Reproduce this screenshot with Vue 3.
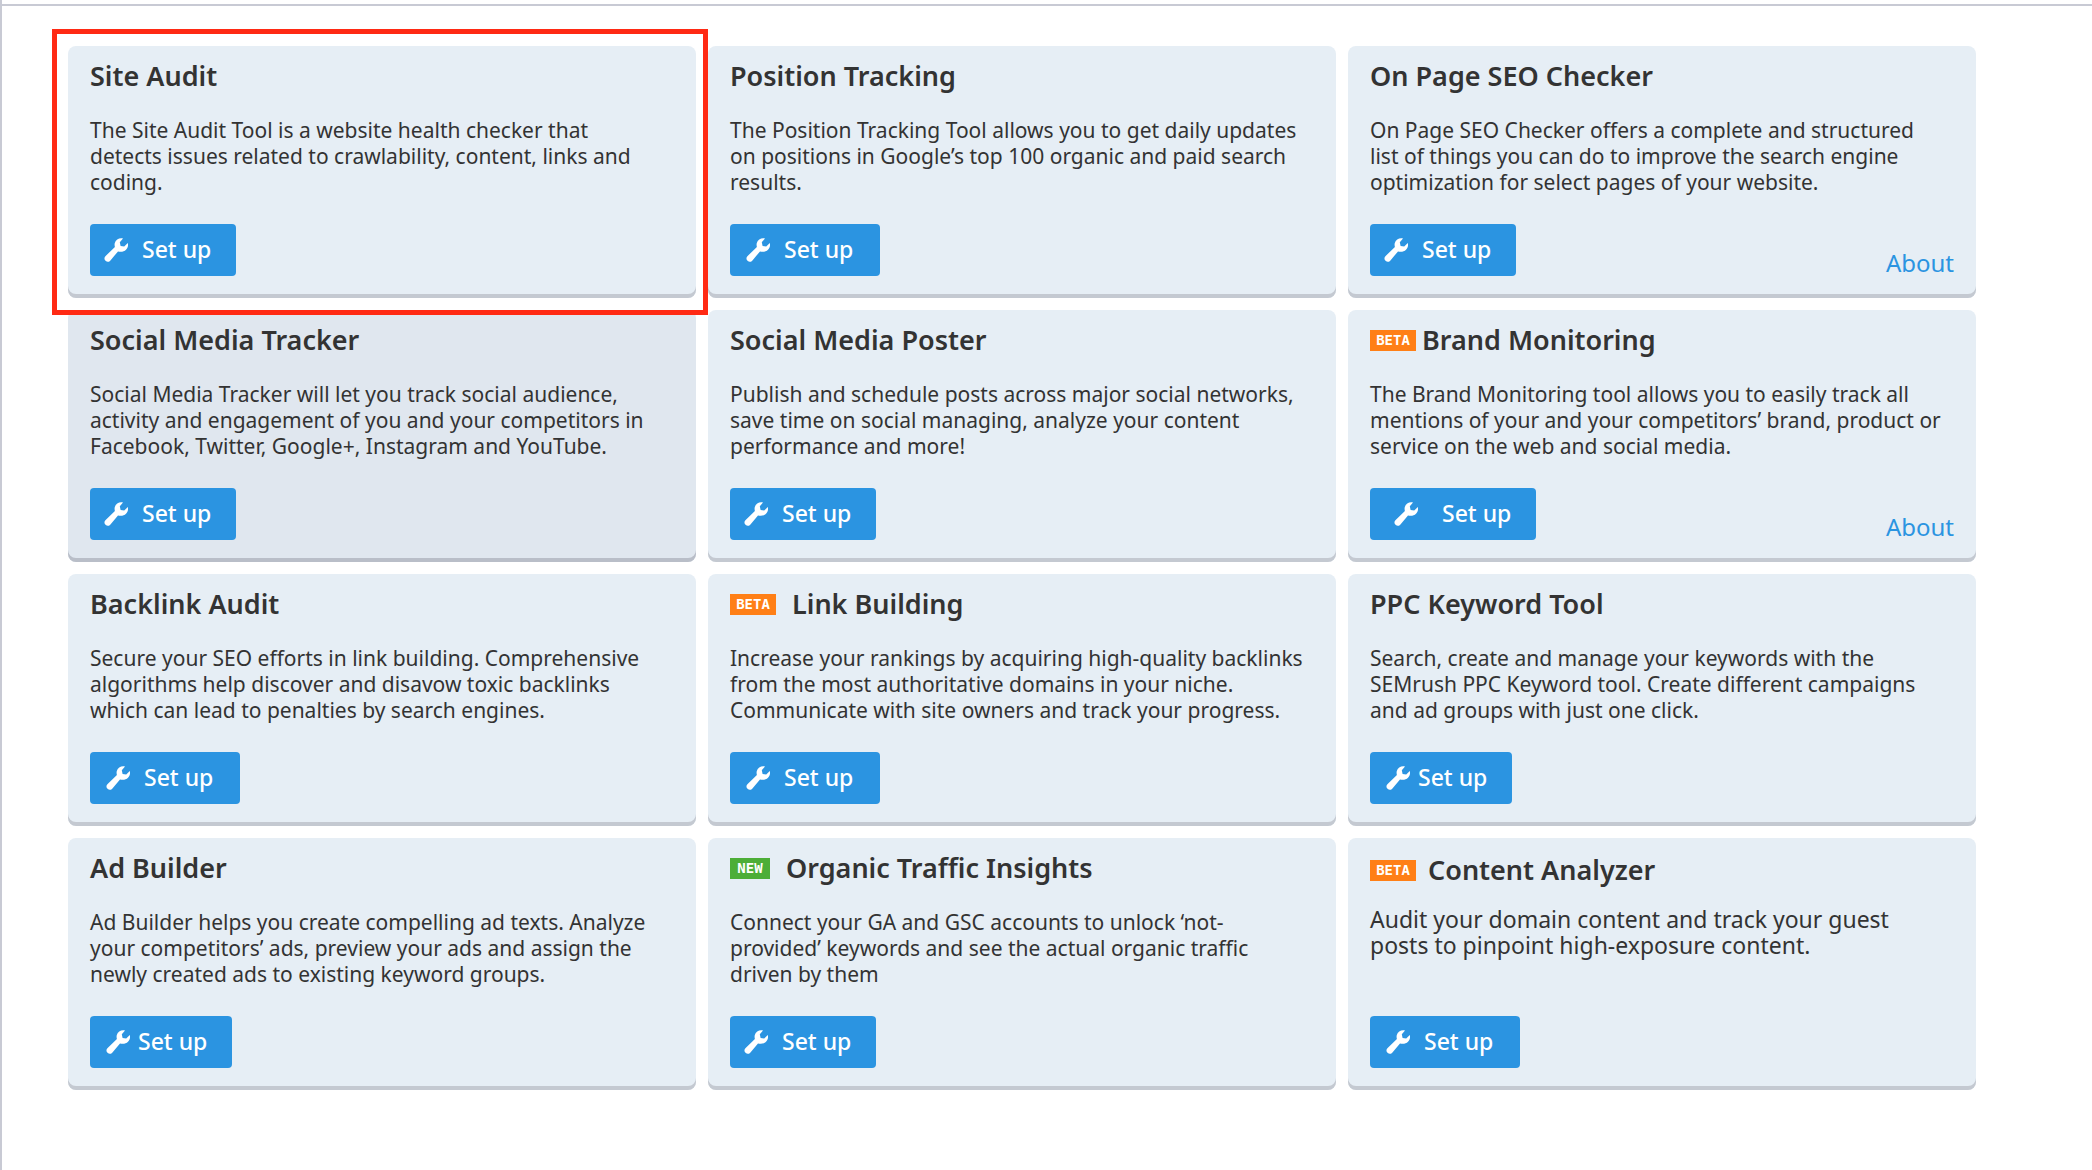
<script setup>
const tools = [
  { title: 'Site Audit', text: 'The Site Audit Tool is a website health checker that\ndetects issues related to crawlability, content, links and\ncoding.', marked: true },
  { title: 'Position Tracking', text: 'The Position Tracking Tool allows you to get daily updates\non positions in Google’s top 100 organic and paid search\nresults.', button: 'roomy' },
  { title: 'On Page SEO Checker', text: 'On Page SEO Checker offers a complete and structured\nlist of things you can do to improve the search engine\noptimization for select pages of your website.', about: true },
  { title: 'Social Media Tracker', text: 'Social Media Tracker will let you track social audience,\nactivity and engagement of you and your competitors in\nFacebook, Twitter, Google+, Instagram and YouTube.', active: true },
  { title: 'Social Media Poster', text: 'Publish and schedule posts across major social networks,\nsave time on social managing, analyze your content\nperformance and more!' },
  { title: 'Brand Monitoring', badge: 'BETA', near: true, text: 'The Brand Monitoring tool allows you to easily track all\nmentions of your and your competitors’ brand, product or\nservice on the web and social media.', button: 'wide', about: true },
  { title: 'Backlink Audit', text: 'Secure your SEO efforts in link building. Comprehensive\nalgorithms help discover and disavow toxic backlinks\nwhich can lead to penalties by search engines.', button: 'roomy' },
  { title: 'Link Building', badge: 'BETA', text: 'Increase your rankings by acquiring high-quality backlinks\nfrom the most authoritative domains in your niche.\nCommunicate with site owners and track your progress.', button: 'roomy' },
  { title: 'PPC Keyword Tool', text: 'Search, create and manage your keywords with the\nSEMrush PPC Keyword tool. Create different campaigns\nand ad groups with just one click.', button: 'compact' },
  { title: 'Ad Builder', text: 'Ad Builder helps you create compelling ad texts. Analyze\nyour competitors’ ads, preview your ads and assign the\nnewly created ads to existing keyword groups.', button: 'compact' },
  { title: 'Organic Traffic Insights', badge: 'NEW', text: 'Connect your GA and GSC accounts to unlock ‘not-\nprovided’ keywords and see the actual organic traffic\ndriven by them' },
  { title: 'Content Analyzer', badge: 'BETA', large: true, text: 'Audit your domain content and track your guest\nposts to pinpoint high-exposure content.', button: 'roomy' },
]
</script>

<template>
  <main class="page">
    <section class="grid">
      <article
        v-for="tool in tools"
        :key="tool.title"
        class="card"
        :class="{ active: tool.active, marked: tool.marked, large: tool.large }"
      >
        <header class="head" :class="{ near: tool.near }">
          <span v-if="tool.badge" class="badge" :class="tool.badge.toLowerCase()">{{ tool.badge }}</span>
          <h2 class="title">{{ tool.title }}</h2>
        </header>
        <p class="text">{{ tool.text }}</p>
        <footer class="foot">
          <button type="button" class="setup" :class="tool.button">
            <svg class="wrench" viewBox="0 0 24 24" aria-hidden="true">
              <path d="M19 .4C15.500-.6 11.800 1.500 10.800 5c-.4 1.400-.2 2.800.1 4L1.400 18.200a3.300 3.300 0 0 0 4.600 4.700L14 13.400c3 .8 6 .3 8-1.700 1.800-1.800 2.400-4.200 1.800-6.600L20.200 8.600 16.600 8 15.800 4.200z" />
            </svg>
            <span class="label">Set up</span>
          </button>
          <a v-if="tool.about" class="about" href="#">About</a>
        </footer>
      </article>
    </section>
  </main>
</template>

<style>
body {
  background: #fff;
}
</style>

<style scoped>
.page {
  position: relative;
  box-sizing: border-box;
  min-height: 100vh;
  padding: 46px 116px 84px 66px;
  border-left: 2px solid #c8cad4;
  color: #333;
  font-family: "Noto Sans", sans-serif;
}
.page::before {
  content: "";
  position: absolute;
  top: 4px;
  left: 0;
  right: 0;
  height: 2px;
  background: #c8cad4;
}
.grid {
  display: grid;
  grid-template-columns: repeat(3, minmax(0, 1fr));
  gap: 12px;
}
.card {
  position: relative;
  display: flex;
  flex-direction: column;
  box-sizing: border-box;
  min-height: 252px;
  padding: 12px 22px 22px;
  background: #e6eef5;
  border-radius: 8px;
  box-shadow: inset 0 -4px #c4c9d1;
}
.card.active {
  background: #e0e7ef;
  box-shadow: inset 0 -4px #b9bec8;
}
.card.marked::after {
  content: "";
  position: absolute;
  z-index: 1;
  inset: -17px -12px -17px -16px;
  border: 5px solid #ff2a14;
  pointer-events: none;
}
.head {
  display: flex;
  align-items: center;
  gap: 16px;
  height: 36px;
}
.head.near {
  gap: 6px;
}
.title {
  margin: 0;
  font-size: 27px;
  line-height: 36px;
  font-weight: 600;
  white-space: nowrap;
}
.badge {
  width: 46px;
  height: 21px;
  background: #ff7f16;
  color: #fff;
  font: bold 14px/21px "DejaVu Sans Mono", monospace;
  text-align: center;
}
.badge.new {
  width: 40px;
  background: #4cae37;
}
.text {
  margin: 23px 0 0;
  font-size: 21px;
  line-height: 26px;
  white-space: pre-line;
}
.large {
  padding-top: 14px;
}
.large .head {
  gap: 12px;
}
.large .text {
  margin-top: 18px;
  font-size: 23px;
}
.foot {
  display: flex;
  align-items: flex-end;
  justify-content: space-between;
  margin-top: auto;
}
.setup {
  display: flex;
  align-items: center;
  gap: 14px;
  box-sizing: border-box;
  width: 146px;
  height: 52px;
  padding: 0 0 0 14px;
  border: 0;
  border-radius: 4px;
  background: #2b94e1;
  color: #fff;
  font: 500 23px/32px "Noto Sans", sans-serif;
  white-space: nowrap;
  cursor: pointer;
}
.setup.roomy {
  width: 150px;
  padding-left: 16px;
}
.setup.wide {
  width: 166px;
  padding-left: 24px;
  gap: 24px;
}
.setup.compact {
  width: 142px;
  padding-left: 16px;
  gap: 8px;
}
.label {
  padding-bottom: 2px;
}
.wrench {
  flex: none;
  width: 24px;
  height: 24px;
  fill: #fff;
}
.about {
  color: #2b94e1;
  font-size: 24px;
  line-height: 26px;
  text-decoration: none;
}
</style>
